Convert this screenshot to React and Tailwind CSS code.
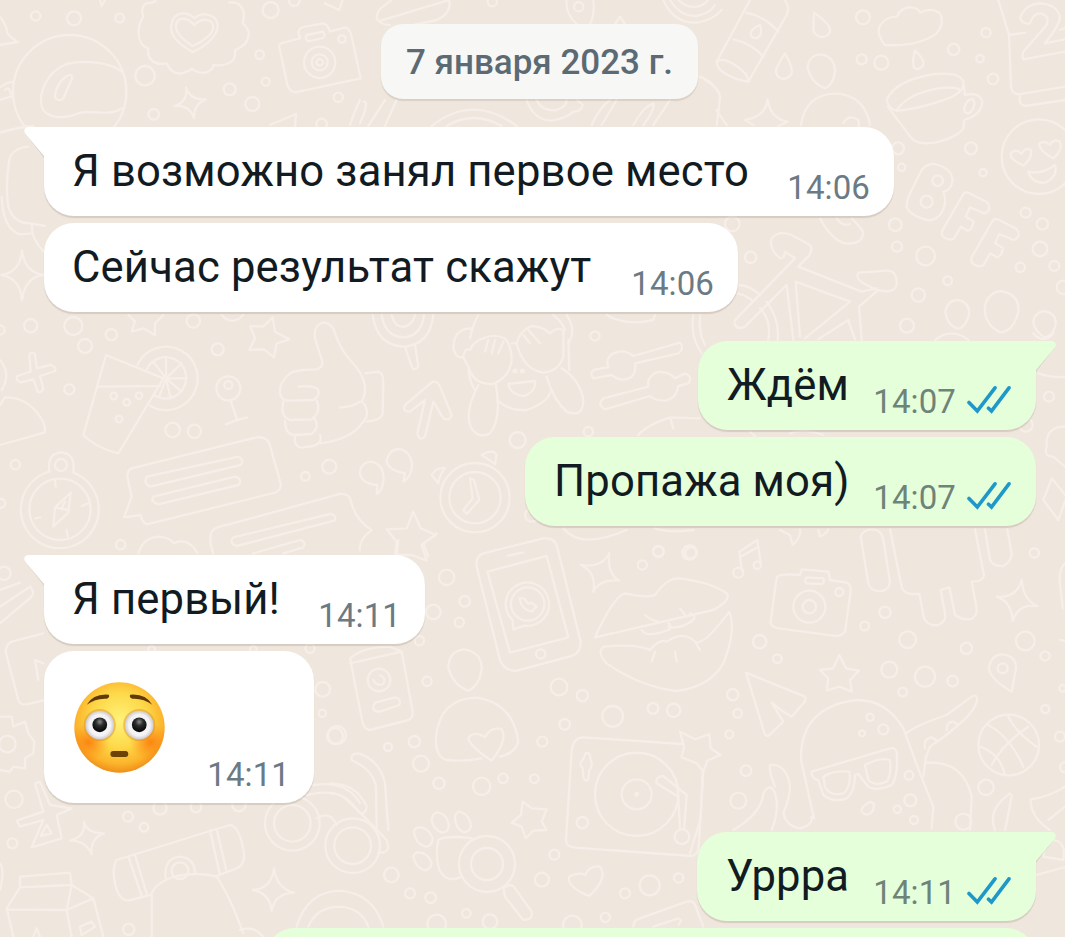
import clsx from 'clsx';

// Wallpaper doodles, grouped in areas. Coordinates inside an area are 1/3 px.
const doodles = [
  {
    x: 0,
    y: 0,
    circles: [
      [107, 48, 14], [222, 55, 21], [359, 54, 13], [812, 30, 24], [779, 164, 13], [435, 227, 29],
      [689, 268, 18], [797, 245, 12], [757, 312, 21], [461, 343, 16], [1015, 292, 14], [883, 2, 16],
      [959, 187, 47], [959, 187, 24], [959, 187, 10], [1026, 117, 11], [209, 275, 170], [965, 372, 16],
    ],
    paths: [
      // heart badge
      'M470 -5 Q470 8 440 10 Q420 20 430 50 Q410 80 418 115 Q425 140 445 145 Q440 185 480 192 L500 190 Q515 225 545 220 Q570 212 575 206 Q600 225 625 215 Q640 205 640 195 Q680 200 700 180 Q708 165 705 150 Q745 135 747 100 Q742 80 728 70 Q740 30 715 12 Q700 5 688 8',
      'M578 156 C540 135 505 105 515 70 C522 35 560 32 583 55 C605 35 645 40 652 70 C660 105 615 140 578 156Z',
      'M578 138 C550 120 525 98 528 75 C533 50 562 50 583 76 C603 52 635 55 640 78 C642 100 610 125 578 138Z',
      // balloon shine
      'M365 215 C330 185 250 180 200 192 C140 215 115 280 125 320 C135 355 190 360 240 338 C280 330 330 350 365 325',
      'M205 226 C218 222 220 235 212 245 L190 295 C180 305 165 300 165 288 C168 260 185 235 205 226Z',
      'M558 262 Q570 300 618 298 Q582 310 582 355 Q570 315 523 318 Q565 305 558 262Z',
      'M0 50 Q20 75 22 100 Q40 120 55 126 Q20 130 0 135',
      // camera
      'M842 130 L900 115 L895 95 Q900 82 915 80 L970 70 Q985 75 990 95 L1035 82 Q1050 85 1055 110 L1082 235 L885 277 Q870 275 862 255 L840 150 Q835 135 842 130Z',
      'M920 105 L970 95 Q980 112 965 115 L925 124 Q912 115 920 105Z',
      'M0 262 Q20 248 38 245 M0 300 L32 290 M15 270 Q28 255 35 290 M0 398 Q60 380 100 378',
      'M85 440 Q35 445 28 480 Q15 560 25 620 Q40 670 90 670 L135 678 M5 590 Q10 690 60 703 L95 700 M95 675 Q95 720 132 755',
      'M66 750 Q72 815 130 825 Q75 832 66 900 Q60 835 5 825 Q62 815 66 750Z',
      'M810 375 L888 342 L885 380 M300 0 L305 18 L315 0 M1050 375 Q1065 330 1080 300 M975 10 L1018 30 L1028 0',
    ],
  },
  {
    x: 360,
    y: 0,
    circles: [[397, 5, 14], [656, 20, 14]],
    paths: [
      'M90 75 Q60 75 50 55 Q50 30 75 15 L95 0 M62 62 L268 0 Q275 40 230 60 L160 75',
      'M620 0 Q615 40 650 72 M700 0 Q705 45 690 72 M765 72 L780 50 L795 72',
      'M910 0 Q940 70 1010 68 Q1060 60 1085 30 M930 0 Q960 50 1010 48 Q1050 40 1065 15 M955 0 Q980 25 1010 20 Q1030 18 1045 0',
      'M0 370 Q30 300 10 305 M25 378 L75 300 M75 378 L110 300 M215 378 Q340 280 470 378 M260 378 Q340 330 425 378',
      'M500 300 Q520 360 575 362 Q620 355 640 335 Q665 335 668 315 L650 298 M530 300 Q545 335 590 330 Q620 320 620 300',
      'M695 375 Q720 320 750 300 M725 375 L770 300 M820 375 Q850 320 880 310 Q885 330 850 375 M880 375 L930 300 M1020 230 Q1060 245 1078 280',
    ],
  },
  {
    x: 705,
    y: 0,
    circles: [
      [474, 52, 21], [470, 178, 15], [529, 188, 21], [843, 98, 14], [746, 148, 17], [825, 176, 11],
      [864, 237, 16], [798, 445, 18], [590, 502, 11], [834, 518, 11], [579, 445, 18], [571, 674, 19],
      [576, 740, 15], [662, 768, 28], [962, 638, 15], [1012, 672, 17], [1005, 747, 22], [946, 802, 14],
      [1048, 798, 15], [1075, 862, 20], [728, 842, 13], [640, 885, 20], [606, 977, 21], [137, 772, 17],
      [82, 672, 22], [1002, 470, 112], [698, 542, 16], [665, 605, 18],
    ],
    paths: [
      // bottle
      'M135 0 L35 185 M130 245 L245 45 Q255 20 240 0 M125 38 Q180 50 220 95 M85 118 Q140 130 175 170',
      'M35 185 Q50 170 90 195 Q130 220 130 245 Q90 240 60 220 Q35 205 35 185Z',
      'M165 75 Q175 105 155 115 Q135 115 137 98 Q142 85 165 75Z',
      'M327 38 Q380 75 375 95 Q365 115 345 110 Q325 105 325 85Z',
      'M240 160 Q265 205 260 220 Q250 238 230 236 Q212 230 213 210 Q220 190 240 160Z',
      'M630 152 Q660 180 655 195 Q645 212 630 205 Q618 195 630 152Z',
      'M348 163 Q390 170 390 215 Q385 255 360 265 Q320 250 308 205 Q310 165 348 163Z',
      'M757 900 Q795 905 792 945 Q780 985 757 986 Q725 975 721 935 Q728 900 757 900Z',
      'M889 873 Q945 885 940 935 Q925 995 885 997 Q840 975 839 925 Q845 878 889 873Z',
      'M1018 933 Q1055 940 1052 975 Q1042 1010 1018 1012 Q985 990 985 962 Q990 938 1018 933Z',
      // cloud
      'M540 135 Q515 105 523 80 Q540 50 575 50 Q590 20 620 22 Q640 25 645 38 Q680 20 705 40 Q720 70 695 100 Q640 140 540 135Z',
      // cup
      'M545 300 Q570 240 690 222 Q765 215 775 245 Q780 275 730 295 Q650 325 575 333 Q550 325 545 300Z M575 330 Q610 280 700 265 Q750 258 765 270',
      'M548 320 L620 415 Q640 435 690 428 Q760 410 775 385 L778 360 Q830 345 832 305 Q825 275 780 285 L775 250 M778 325 Q785 295 805 298 Q815 320 795 338 Q778 345 778 325Z',
      // calendar
      'M880 0 L912 105 L918 260 Q920 280 940 283 L1080 260 M912 105 L960 98 M945 290 Q940 315 960 318 L1080 300',
      'M1080 155 L955 178 Q950 170 955 155 L1025 75 Q1035 45 1005 40 Q985 40 975 70 Q955 75 945 55 Q960 10 1010 10 Q1060 15 1065 55 Q1060 80 1020 130 L1080 118 M1065 90 L1080 85',
      'M0 240 Q45 265 45 295 L35 375 M35 330 Q40 340 65 375',
      'M145 375 L120 360 Q182 350 188 298 Q195 355 248 365 L220 378 M288 375 Q300 285 390 280 Q480 285 495 375 M415 370 Q430 340 460 360 L462 378',
      // heart eyes
      'M955 497 Q910 475 918 458 Q935 445 950 462 Q960 440 978 450 Q982 475 955 497Z',
      'M1045 475 Q1000 450 1003 430 Q1020 420 1035 435 Q1045 415 1065 425 Q1075 450 1045 475Z',
      'M970 515 Q1010 525 1050 495 Q1060 530 1020 548 Q980 550 970 515Z',
      // BFF
      'M650 510 Q670 485 700 495 Q745 510 742 545 Q738 572 715 575 Q730 610 705 645 Q680 670 650 655 Q610 640 605 620 Q605 600 615 580Z',
      'M790 578 L845 606 Q858 620 850 632 Q840 645 828 636 L795 622 L782 650 L806 664 Q802 690 788 692 L768 680 L748 714 Q738 725 716 712 Q706 702 714 688 L774 584 Q780 574 790 578Z',
      'M878 658 L933 686 Q946 700 938 712 Q928 725 916 716 L883 702 L870 730 L894 744 Q890 770 876 772 L856 760 L836 794 Q826 805 804 792 Q794 782 802 768 L862 664 Q868 654 878 658Z',
      'M345 655 Q380 720 420 730 Q470 735 475 700 Q475 690 440 655 M395 655 Q410 680 435 672',
      // bicycle
      'M245 855 L120 980 Q100 990 90 975 Q85 965 95 955 L270 775 L240 755 Q240 775 225 775 Q190 745 200 715 Q220 690 260 705 L315 735 Q325 750 310 770 L280 800 L470 875 L515 865',
      'M245 855 L265 1020 M285 1010 L272 845 L435 905 L300 1015 M470 1020 L462 920 L520 870 Q580 885 575 840 Q570 810 545 812 L460 818 Q450 835 475 850 L515 870 M340 1018 L430 960 L450 1018',
      'M105 855 Q140 860 165 885 M100 880 Q120 885 140 900 M165 925 Q200 960 190 1020 M185 905 Q225 960 218 1020 M690 1020 Q740 980 790 1020',
    ],
  },
  {
    x: 0,
    y: 310,
    circles: [
      [92, 47, 20], [220, 48, 27], [255, 108, 21], [334, 74, 17], [208, 238, 15], [580, 33, 20],
      [653, 118, 18], [685, 235, 36], [685, 225, 12], [518, 360, 22], [583, 364, 20], [46, 464, 14],
      [3, 580, 13], [362, 704, 14], [916, 499, 13], [988, 470, 21], [341, 258, 10], [380, 277, 10],
      [417, 257, 10], [357, 327, 10], [183, 465, 18], [180, 598, 92], [0, 60, 14],
    ],
    paths: [
      // cocktail
      'M318 135 L250 375 Q290 415 355 430 L490 205Z M295 230 L480 228',
      'M412 165 A95 95 0 1 1 450 287 M440 178 A62 62 0 1 1 462 255',
      'M498 205 L498 145 M498 205 L545 160 M498 205 L560 205 M498 205 L545 245 M498 205 L512 265 M498 205 L478 260 M498 205 L462 158',
      // compass
      'M148 485 A117 117 0 1 0 220 488 Q228 430 183 427 Q140 430 148 485',
      'M212 548 L165 592 L160 650 L205 608Z M165 592 L205 600 M185 595 L195 575 M165 512 L167 530 M105 625 L120 622 M200 660 L203 680 M245 588 L265 580',
      'M88 135 Q95 122 105 133 L110 175 L150 165 Q170 170 165 183 L120 198 L130 235 Q125 250 113 245 L100 208 L62 217 Q45 210 52 198 L92 185Z',
      'M385 15 L405 35 L395 65 L430 55 L465 75 L465 40 L490 15',
      'M818 22 L825 65 L868 88 L830 100 L822 142 L792 118 L748 120 L765 85 L750 48 L790 50Z',
      'M0 150 Q35 190 5 240 M0 285 L15 262 Q80 260 120 320 Q140 350 133 368 L0 405',
      'M692 272 L710 325 M678 343 Q705 330 742 322',
      // thumb up
      'M945 85 Q940 40 975 37 Q1000 45 1005 70 Q1020 115 1050 150 M945 85 L967 155 Q970 170 950 178 Q890 178 870 190 Q835 220 840 250 Q845 275 870 272 L940 270 Q960 260 955 240 Q945 225 895 230',
      'M850 275 Q840 320 870 330 L935 328 Q965 305 950 272 M855 332 Q855 370 880 375 L935 372 Q960 350 945 328 M885 378 Q880 410 905 413 L940 408 Q970 395 960 375 M960 400 Q1010 395 1050 373 M1020 293 Q1060 290 1080 275',
      // speech bubbles
      'M395 475 L770 382 Q800 380 808 400 L842 520 Q845 540 825 548 L440 643 Q425 635 422 615 L372 622 L395 560 L382 500 Q382 480 395 475Z',
      'M440 500 L715 440 Q735 450 722 465 L450 530 Q430 520 440 500Z M460 560 L705 500 Q730 508 715 525 L475 583 Q450 575 460 560Z',
      'M640 730 Q625 690 635 665 Q645 650 680 645 L1020 552 Q1045 550 1052 570 M700 682 L990 612 Q1012 615 1003 632 L710 708 Q685 700 700 682Z M760 730 L900 690 Q920 695 910 712 L850 730',
      'M415 730 Q430 680 480 680 Q515 685 520 700 Q565 680 592 728 M665 15 Q695 50 730 15',
    ],
  },
  {
    x: 350,
    y: 310,
    circles: [
      [735, 78, 14], [503, 390, 24], [715, 365, 14], [925, 724, 16], [1020, 726, 20], [375, 563, 77],
      [375, 563, 104], [545, 615, 20], [495, 183, 4], [517, 183, 4],
    ],
    paths: [
      'M0 150 Q40 190 45 230 Q45 260 35 275 Q55 290 50 320 Q30 355 0 373 M45 190 L85 185 Q100 190 100 215 L98 310 Q95 330 50 335',
      // lollipop
      'M68 15 Q80 105 160 110 Q240 105 250 15 M95 15 Q105 80 160 82 Q215 78 222 15 M125 15 Q135 55 165 50 Q190 40 195 15 M165 110 L185 170 Q192 185 205 170 L195 105',
      // monkey
      'M360 85 Q370 40 385 15 M610 15 Q640 40 645 60 M365 55 Q310 55 310 115 Q320 150 340 140 M650 15 Q680 60 655 100',
      'M345 125 Q345 115 360 120 Q370 95 400 85 Q430 70 465 85 Q485 110 485 150 Q480 200 430 222 Q370 225 355 170 L338 140Z',
      'M500 100 Q510 60 545 48 Q580 50 600 70 Q620 50 640 60 L640 140 Q625 185 580 188 Q520 180 500 100Z',
      'M425 130 L435 90 M445 130 L460 95 M540 100 L520 75 M570 100 L535 60 M405 125 L415 90 M485 100 L500 100',
      'M385 225 Q345 300 360 345 Q380 390 420 370 Q455 330 438 225 M590 200 Q610 270 650 305 Q700 325 700 270 Q690 210 635 175',
      'M440 270 Q480 305 530 300 Q590 280 602 245 M475 222 L555 213 Q560 240 525 258 Q480 255 475 222Z M355 180 Q360 220 375 240 M655 90 L658 180',
      'M248 215 Q265 215 270 230 L305 315 Q300 335 280 325 L250 275 L225 380 Q208 395 202 370 L225 270 L180 305 Q155 305 165 285Z',
      // sliders
      'M775 172 L735 178 Q715 190 730 205 L785 195 Q815 220 845 200 Q860 185 855 160 L985 130 Q1005 115 990 98 L850 138 Q820 115 790 130 Q765 145 775 172Z',
      'M760 265 L895 230 Q890 200 920 187 Q950 180 975 205 L1005 190 Q1030 200 1015 220 L985 228 Q980 265 945 272 Q915 272 900 258 L765 298 Q740 285 760 265Z',
      'M1030 15 Q1020 80 1055 130 M1050 15 Q1045 70 1065 105 M770 15 Q830 50 910 30 L915 15',
      'M80 552 L82 525 Q30 520 30 485 Q35 455 65 455 Q105 465 100 515 Q95 545 80 552Z M160 515 L165 490 Q110 480 110 450 Q120 415 150 417 Q190 430 185 475 Q180 505 160 515Z',
      // alarm clock
      'M435 462 L440 435 Q430 415 395 435Z M285 475 Q260 470 245 495 L265 520 Q270 490 285 475 M360 505 L372 510 L388 570 L350 612 L340 600 L368 565Z',
      'M235 740 L220 700 L258 675 L212 655 L190 605 L170 655 L110 658 L140 695 L135 740',
      'M865 375 Q890 345 960 322 L1050 325 M960 322 L970 355 M640 655 Q690 720 830 660 M915 655 Q960 670 1030 660 M2 570 Q15 630 65 660 Q25 690 30 720',
    ],
  },
  {
    x: 690,
    y: 330,
    circles: [[1077, 200, 15], [1008, 285, 20]],
    paths: [
      'M1125 290 Q1065 290 1070 350 Q1060 380 1090 380 L1125 410 M1085 445 L1060 510 L1105 570 L1130 500Z M1045 130 Q1090 145 1125 140 M180 305 L195 318 M300 310 Q340 295 400 315 M1030 10 Q1060 45 1090 10',
    ],
  },
  {
    x: 330,
    y: 530,
    circles: [
      [350, 142, 23], [404, 214, 16], [310, 246, 22], [388, 277, 14], [268, 332, 14], [291, 454, 14],
      [21, 615, 27], [253, 635, 17], [174, 651, 12], [273, 701, 24], [327, 760, 17], [455, 769, 26],
      [519, 745, 14], [613, 746, 13], [687, 471, 25], [757, 497, 17], [704, 583, 16], [848, 559, 31],
      [969, 535, 16], [1031, 541, 20], [637, 635, 15], [985, 65, 16], [1078, 68, 21], [937, 105, 14],
      [920, 793, 125], [920, 793, 45], [920, 793, 4], [757, 878, 17], [632, 372, 14], [593, 222, 50],
      [147, 450, 34], [1056, 920, 22],
    ],
    paths: [
      'M205 30 L200 75 L245 75 L290 92 L275 45 L320 10',
      // phone
      'M460 70 L640 25 Q670 22 680 45 L752 335 Q752 370 725 378 L560 422 Q525 425 510 390 L440 110 Q435 80 460 70Z M472 125 L650 78 L715 322 L540 368Z M535 77 L580 67',
      'M548 270 A65 65 0 1 1 585 287 L550 298Z M568 205 Q575 240 605 245 L620 230 L605 218 L595 222 L582 205Z',
      'M838 70 Q830 130 868 152 Q810 145 790 185 Q800 125 752 105 Q815 115 838 70Z',
      // lips
      'M795 322 Q850 200 885 190 Q950 205 975 195 Q1010 145 1045 145 Q1140 155 1190 190 Q1205 210 1150 240 Q1000 275 795 322Z',
      'M820 350 Q920 340 960 360 Q990 325 1010 335 Q1060 300 1095 335 Q1120 350 1198 245 Q1220 300 1180 400 Q1140 470 1040 483 Q930 470 830 400 Q800 370 820 350Z',
      'M935 300 Q950 325 1015 300 Q1030 290 1015 280 M1015 290 Q1050 300 1090 270 Q1100 255 1080 250 M945 255 Q960 270 985 275 M1050 235 L1065 255 M975 365 L965 395 M1035 365 L1040 395 M1095 335 L1110 360',
      // can
      'M60 385 Q100 350 180 350 L215 365 L248 545 Q250 565 235 570 L120 600 Q105 598 98 580Z M60 400 L215 365 M150 435 Q170 445 160 462 Q140 470 130 450 M135 518 L195 502 Q215 505 208 525 L150 545 Q120 545 135 518Z',
      'M400 358 Q455 365 455 415 Q450 465 415 483 Q370 465 355 415 Q355 365 400 358Z',
      'M510 680 Q555 670 565 635 Q550 520 440 503 Q330 505 318 620 Q315 680 350 690 Q400 695 455 685 M485 692 Q420 650 415 625 Q430 600 465 622 Q480 590 515 597 Q535 630 485 692Z',
      // turntable
      'M1060 642 L760 622 Q730 622 725 660 L708 930 Q708 950 735 953 L1085 978 Q1105 975 1106 950 L1120 725',
      'M1050 900 L1045 800 L980 760 Q975 740 1000 738 L1070 795 L1062 900 M768 668 Q780 665 782 690 Q790 710 778 720 L775 750 Q762 755 760 740 L758 715 Q745 700 758 690Z',
      'M175 900 L165 760 Q150 690 85 670 Q60 670 65 690 Q130 720 138 770 L140 900 M0 760 Q80 760 110 830 Q105 860 85 845 Q50 790 0 790',
    ],
  },
  {
    x: 690,
    y: 520,
    circles: [
      [3, 99, 17], [209, 365, 20], [262, 416, 13], [524, 318, 13], [585, 277, 17], [653, 359, 25],
      [598, 449, 24], [705, 470, 30], [638, 516, 13], [788, 483, 16], [829, 385, 17], [1006, 363, 28],
      [1065, 408, 14], [1033, 99, 14], [938, 445, 15], [128, 524, 17], [143, 580, 13], [118, 643, 12],
      [168, 752, 16], [145, 842, 24], [358, 260, 48], [358, 260, 20], [448, 216, 12], [540, 592, 11],
      [516, 640, 9], [580, 628, 15], [657, 766, 13], [661, 841, 18], [622, 868, 11], [888, 802, 23],
      [1066, 567, 12], [1110, 650, 15], [1118, 505, 10], [956, 675, 91], [202, 136, 11], [145, 158, 15],
      [1125, 742, 15], [820, 905, 24], [672, 900, 12],
    ],
    paths: [
      'M58 642 L62 685 L92 705 L52 722 L40 755 L20 730 L-25 712 L-18 680 L-30 635 L15 658Z M38 755 L32 895 L0 1000',
      'M155 150 L148 95 L202 60 L212 130 M150 112 L205 80',
      'M270 30 L300 45 L308 75 Q335 50 330 28 M385 30 L390 50 Q410 40 415 28',
      // camera
      'M262 170 Q275 160 330 165 L335 148 L415 155 L420 180 L470 188 Q485 195 482 215 L465 335 Q455 350 430 347 L265 325 Q242 320 242 305 L258 185Z M350 172 L400 175 Q405 190 395 192 L350 190 Q340 180 350 172Z',
      // dripping paint
      'M512 50 Q520 28 545 28 Q575 28 580 60 L600 185 Q598 212 570 214 Q540 212 535 190Z',
      'M600 28 L635 200 Q640 220 665 222 L688 222 L702 295 Q715 320 745 315 Q770 305 765 280 L752 210 L778 202 L795 285 Q815 300 840 298 Q862 290 860 265 L845 185 Q880 185 882 165 L855 28 M885 28 L900 120 Q910 140 940 138 Q965 125 965 100 L952 28',
      'M995 180 Q1000 240 1042 258 Q985 250 968 303 Q965 245 920 230 Q980 235 995 180Z',
      'M448 405 L468 445 L507 452 L480 480 L485 515 L447 500 L410 512 L415 475 L390 450 L430 445Z',
      'M965 515 Q895 475 897 440 Q905 402 940 403 Q980 410 978 445Z',
      'M168 458 L345 530 Q350 540 340 550 L305 590 L275 572 L245 548 L280 605 L235 648 Q225 648 222 635Z',
      // ghost in sunglasses
      'M372 895 L333 720 Q330 560 500 540 Q590 540 640 625 L690 760 L730 860 L725 925',
      'M365 755 L600 685 Q620 682 620 700 Q625 770 605 795 Q560 815 535 800 L505 762 L495 765 Q495 815 470 835 Q430 850 400 825 L385 780 Q362 775 365 755Z M400 770 Q430 750 478 755 Q485 800 460 820 Q420 830 405 800Z M525 735 Q570 710 600 720 Q605 765 590 785 Q555 800 535 780Z',
      'M540 845 L552 850 L550 870 Q530 895 515 875 Q510 862 540 845Z',
      'M648 640 Q680 615 770 585 L845 530 Q865 520 860 545 Q850 590 720 680 L708 710 L700 770 M708 728 Q820 720 845 830 L840 930 M705 685 Q700 655 725 652 L742 662 M770 630 Q770 605 790 605 L800 612',
      // basketball
      'M895 615 Q960 650 1000 740 M955 590 Q980 640 1040 680 M870 680 Q930 700 945 765 M905 735 Q940 670 1015 620',
      'M1125 130 Q1105 150 1110 190 L1118 265 M1110 360 L1125 362 M1125 800 Q1080 830 1022 838 Q1020 890 1080 930 M1125 860 L1075 900 M960 820 Q890 870 915 930 M965 825 Q960 860 945 930',
      'M130 930 Q215 880 220 820 Q240 785 255 820 Q270 870 245 930 M240 735 Q290 730 300 800 Q300 830 280 880 Q290 920 330 925 Q370 915 365 890 M240 735 Q235 750 255 800',
      'M1040 1065 L1130 1040 M1060 1010 Q1065 960 1095 960 Q1130 970 1120 1020Z',
    ],
  },
  {
    x: 0,
    y: 540,
    circles: [[12, 100, 20], [22, 612, 25], [968, 448, 22], [967, 520, 11], [1005, 588, 24], [930, 325, 14], [455, 328, 10], [760, 328, 10]],
    paths: [
      'M0 200 L90 140 Q105 155 95 170 L0 250 M0 150 L60 128 M130 280 L35 305 Q15 315 18 340 L55 480 Q60 495 80 493 L135 480 M130 370 L105 360 L115 420',
      'M0 530 L35 530 L40 560 L75 545 L85 580 L103 605 L100 640 L75 655 L75 685 L40 680 L30 695 L0 690',
    ],
  },
  {
    x: 0,
    y: 760,
    circles: [
      [42, 118, 26], [37, 250, 15], [384, 170, 15], [432, 202, 13], [480, 144, 20], [588, 141, 16],
      [717, 134, 20], [386, 508, 17], [540, 332, 25], [877, 190, 82], [877, 190, 55], [1058, 257, 82], [1058, 257, 55],
    ],
    paths: [
      'M950 175 Q990 150 1010 195 M940 75 Q1040 60 1080 130 M920 105 Q1010 85 1040 120 Q1075 150 1160 240 L1165 265 Q1155 280 1135 278',
      'M105 70 L120 65 L150 135 L215 145 L170 165 L185 235 L95 262 L130 180 L60 200 L50 182 L130 155Z M140 195 L155 220 L122 228Z',
      'M252 185 Q260 220 312 220 Q270 235 275 282 Q255 240 210 242 Q258 230 252 185Z',
      // scroll
      'M650 348 L710 325 Q735 315 732 280 Q720 200 690 195 L640 210 L350 300 Q335 320 345 370 Q355 420 385 422 L450 405 M385 290 L425 408 M405 285 L440 400 M630 210 L660 345 M650 208 L680 335 M497 355 Q490 295 540 290 Q585 295 585 340',
      'M455 530 L455 400 Q470 365 530 348 Q600 335 650 350 Q690 410 730 520 M720 510 Q760 495 790 530',
      // milk box
      'M60 350 L210 338 L215 375 L60 382Z M60 382 L20 445 L40 530 M215 375 L200 450 L20 448 M215 375 L280 415 L310 530 M200 450 L215 530 M200 450 L280 415 M240 500 L275 485 L285 500 L245 525Z M100 530 L110 505 L120 530',
      'M822 325 Q830 385 882 398 Q825 400 815 452 Q810 400 758 390 Q815 385 822 325Z',
      'M890 500 Q920 395 1020 392 Q1120 400 1150 500 M925 500 Q950 440 1020 440 Q1085 445 1105 500 M0 310 Q15 330 0 390',
    ],
  },
  {
    x: 350,
    y: 760,
    circles: [
      [613, 284, 15], [576, 359, 21], [899, 376, 30], [986, 354, 14], [825, 400, 15], [766, 472, 14],
      [667, 495, 28], [420, 485, 22], [260, 492, 28], [349, 460, 13], [242, 413, 16], [180, 400, 15],
      [124, 345, 22], [411, 312, 84], [411, 312, 48],
    ],
    paths: [
      'M518 125 L545 145 L590 148 L575 185 L590 210 L550 212 L527 235 L515 200 L485 188 L513 165Z',
      // paw
      'M262 157 Q290 160 297 195 Q295 218 275 218 Q245 205 245 175 Q250 158 262 157Z M330 155 Q360 165 363 200 Q355 218 340 216 Q315 205 315 170 Q320 155 330 155Z M205 202 Q235 200 248 235 Q245 262 225 260 Q195 250 192 215 Q195 203 205 202Z M205 277 Q235 278 245 310 Q240 332 222 330 Q195 320 190 290 Q195 277 205 277Z',
      'M365 235 Q290 225 265 240 Q255 290 268 330 Q290 370 330 352 M460 385 L475 375 L490 378 L545 455 Q550 480 520 480 L465 410Z',
      'M718 408 Q650 380 657 350 Q685 335 705 345 Q720 315 750 320 Q775 355 718 408Z',
      'M850 500 Q850 480 870 475 L1010 425 Q1030 420 1035 435 L1060 500 M910 500 L985 475 Q1000 480 985 495',
    ],
  },
];

const messages = [
  { id: 1, text: 'Я возможно занял первое место', time: '14:06', tail: true, box: 'w-[850px] mt-7' },
  { id: 2, text: 'Сейчас результат скажут', time: '14:06', box: 'w-[694px] mt-[7px]' },
  { id: 3, text: 'Ждём', time: '14:07', own: true, tail: true, box: 'w-[338px] mt-[29px]' },
  { id: 4, text: 'Пропажа моя)', time: '14:07', own: true, box: 'w-[511px] mt-[7px]' },
  { id: 5, text: 'Я первый!', time: '14:11', tail: true, box: 'w-[381px] mt-[29px]' },
  { id: 6, emoji: true, time: '14:11', box: 'w-[270px] mt-[7px]' },
  { id: 7, text: 'Уррра', time: '14:11', own: true, tail: true, box: 'w-[339px] mt-[29px]' },
  { id: 8, own: true, box: 'w-[771px] mt-[7px]' },
];

function Wallpaper() {
  return (
    <svg
      className="absolute inset-0"
      width="1065"
      height="937"
      viewBox="0 0 1065 937"
      fill="none"
      stroke="#f6eee8"
      strokeWidth="7"
      strokeLinecap="round"
      strokeLinejoin="round"
    >
      {doodles.map((area) => (
        <g key={`${area.x}-${area.y}`} transform={`translate(${area.x} ${area.y}) scale(0.33333)`}>
          {area.circles.map(([cx, cy, r]) => (
            <circle key={`${cx}-${cy}-${r}`} cx={cx} cy={cy} r={r} />
          ))}
          {area.paths.map((d) => (
            <path key={d} d={d} />
          ))}
        </g>
      ))}
    </svg>
  );
}

function Tail({ own }) {
  return (
    <svg
      className={clsx('absolute top-0', own ? '-right-5 -scale-x-100 text-[#e5ffdb]' : '-left-5 text-white')}
      width="24"
      height="32"
      viewBox="0 0 24 32"
    >
      <path d="M20 1 H5 Q1 1 1.5 7 L20 31Z" fill="#5a46321f" />
      <path d="M24 0 H5 C0.5 0 -1 3.5 1.5 7 L20 29 H24Z" fill="currentColor" />
    </svg>
  );
}

function ReadChecks() {
  return (
    <svg
      className="ml-[11px] mr-px mb-[15px]"
      width="44"
      height="30"
      viewBox="0 0 44 30"
      fill="none"
      stroke="#1e97c9"
      strokeWidth="3.6"
      strokeLinecap="round"
      strokeLinejoin="miter"
    >
      <path d="M2 17.5 L10.3 26 L28 2.8" />
      <path d="M21.5 23.2 L24.5 26 L42 2.8" />
    </svg>
  );
}

function FlushedFace() {
  return (
    <svg width="91" height="91" viewBox="0 0 272 272">
      <defs>
        <radialGradient id="skin" cx="0.5" cy="0.42" r="0.6">
          <stop offset="0" stopColor="#fff27a" />
          <stop offset="0.5" stopColor="#fdd94a" />
          <stop offset="0.8" stopColor="#fcb42b" />
          <stop offset="1" stopColor="#ec8614" />
        </radialGradient>
        <radialGradient id="blush">
          <stop offset="0" stopColor="#fb7a0c" stopOpacity="0.85" />
          <stop offset="1" stopColor="#fb8a14" stopOpacity="0" />
        </radialGradient>
        <radialGradient id="eye">
          <stop offset="0" stopColor="#ffffff" />
          <stop offset="0.75" stopColor="#f2f1f4" />
          <stop offset="1" stopColor="#cfc8cc" />
        </radialGradient>
        <radialGradient id="pupil" cx="0.5" cy="0.3" r="0.6">
          <stop offset="0" stopColor="#8a8a8a" />
          <stop offset="0.45" stopColor="#2c2c2c" />
          <stop offset="1" stopColor="#0c0c0c" />
        </radialGradient>
        <clipPath id="head">
          <circle cx="136" cy="136" r="135" />
        </clipPath>
      </defs>
      <g clipPath="url(#head)">
        <rect width="272" height="272" fill="url(#skin)" />
        <ellipse cx="44" cy="180" rx="62" ry="56" fill="url(#blush)" />
        <ellipse cx="228" cy="180" rx="62" ry="56" fill="url(#blush)" />
      </g>
      <circle cx="77" cy="129" r="48" fill="#d98f24" fillOpacity="0.45" />
      <circle cx="195" cy="129" r="48" fill="#d98f24" fillOpacity="0.45" />
      <circle cx="77" cy="129" r="43" fill="url(#eye)" />
      <circle cx="195" cy="129" r="43" fill="url(#eye)" />
      <circle cx="77" cy="128" r="22" fill="url(#pupil)" />
      <circle cx="195" cy="128" r="22" fill="url(#pupil)" />
      <path d="M38 68 Q58 34 104 38 Q108 46 98 50 Q64 48 38 68Z" fill="#5f3a08" />
      <path d="M234 68 Q214 34 168 38 Q164 46 174 50 Q208 48 234 68Z" fill="#5f3a08" />
      <rect x="109" y="206" width="53" height="18" rx="8" fill="#6d4207" />
    </svg>
  );
}

function Bubble({ message }) {
  const { text, time, emoji, own, tail, box } = message;

  return (
    <div
      className={clsx(
        'relative flex shrink-0 justify-between rounded-[30px] pr-6 shadow-[0_2px_1px_rgba(90,70,50,0.16)]',
        own ? 'self-end bg-[#e5ffdb] pl-[29px]' : 'self-start bg-white pl-7',
        emoji ? 'h-[152px]' : 'h-[89px]',
        tail && (own ? 'rounded-tr-none' : 'rounded-tl-none'),
        box
      )}
    >
      {tail && <Tail own={own} />}
      {text && (
        <span className="whitespace-nowrap text-[43.6px] leading-[89px] tracking-[0.17px] text-[#111b21]">{text}</span>
      )}
      {emoji && (
        <div className="pl-0.5 pt-[31px]">
          <FlushedFace />
        </div>
      )}
      {time && (
        <div className="flex items-end">
          <span className={clsx('pb-2 text-[33px] leading-10 tracking-[0.1px]', own ? 'text-[#6f8378]' : 'text-[#6b7a83]')}>
            {time}
          </span>
          {own && <ReadChecks />}
        </div>
      )}
    </div>
  );
}

export default function App() {
  return (
    <div className="relative h-[937px] w-[1065px] overflow-hidden bg-[#efe6dd] font-['Roboto',sans-serif]">
      <Wallpaper />
      <div className="relative flex h-full flex-col pl-11 pr-[29px] pt-6">
        {/* Date */}
        <div className="ml-[337px] flex h-[75px] w-[317px] shrink-0 items-center justify-center rounded-[22px] bg-[#f7f7f6] pt-[3px] text-[35px] font-medium text-[#5b6a73] shadow-[0_2px_1px_rgba(90,70,50,0.14)]">
          7 января 2023 г.
        </div>

        {messages.map((message) => (
          <Bubble key={message.id} message={message} />
        ))}
      </div>
    </div>
  );
}
